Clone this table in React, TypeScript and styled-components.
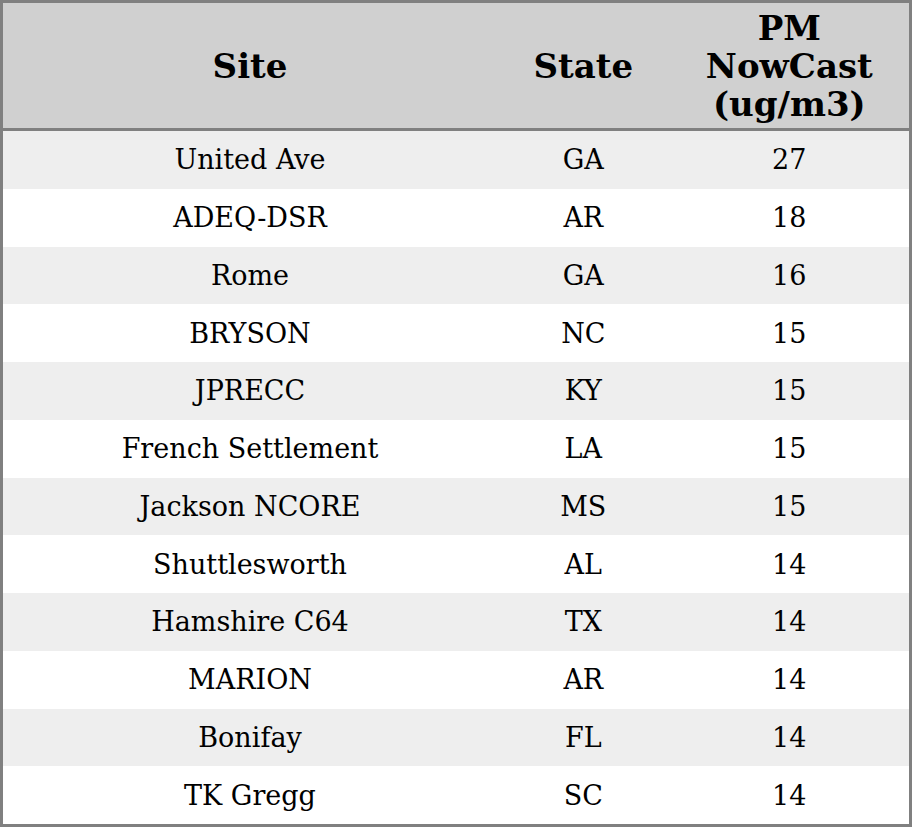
import React from 'react';
import styled, {createGlobalStyle} from "styled-components";

const GlobalStyle = createGlobalStyle`
  html, body {
    margin: 0;
    padding: 0;
    background: #ffffff;
  }
  body {
    font-family: "DejaVu Serif", serif;
    color: #000000;
  }
`

const TableContainer = styled.div`
  display: flex;
  flex-direction: column;
  width: 912px;
  height: 827px;
  box-sizing: border-box;
  border: 3px solid #808080;
`
const Row = styled.div<{header?: boolean, striped?: boolean}>`
  display: grid;
  grid-template-columns: 494px 172.6px 1fr;
  align-items: center;
  text-align: center;
  background: ${props => props.header ? '#d0d0d0' : props.striped ? '#eeeeee' : '#ffffff'};
  height: ${props => props.header ? '125px' : 'auto'};
  flex: ${props => props.header ? '0 0 auto' : '1 1 0'};
  border-bottom: ${props => props.header ? '3px solid #808080' : 'none'};
  font-size: ${props => props.header ? '34px' : '27px'};
  font-weight: ${props => props.header ? 'bold' : 'normal'};
  line-height: ${props => props.header ? '38px' : 'normal'};
`
const Cell = styled.div`
  padding: 0 4px;
`

const rows = [
    {site: 'United Ave', state: 'GA', pm: 27},
    {site: 'ADEQ-DSR', state: 'AR', pm: 18},
    {site: 'Rome', state: 'GA', pm: 16},
    {site: 'BRYSON', state: 'NC', pm: 15},
    {site: 'JPRECC', state: 'KY', pm: 15},
    {site: 'French Settlement', state: 'LA', pm: 15},
    {site: 'Jackson NCORE', state: 'MS', pm: 15},
    {site: 'Shuttlesworth', state: 'AL', pm: 14},
    {site: 'Hamshire C64', state: 'TX', pm: 14},
    {site: 'MARION', state: 'AR', pm: 14},
    {site: 'Bonifay', state: 'FL', pm: 14},
    {site: 'TK Gregg', state: 'SC', pm: 14},
]

const App: React.FC = () => {
    return (
        <>
            <GlobalStyle/>
            <TableContainer>
                <Row header>
                    <Cell>Site</Cell>
                    <Cell>State</Cell>
                    <Cell>PM<br/>NowCast<br/>(ug/m3)</Cell>
                </Row>
                {rows.map((data, i) => (
                    <Row key={data.site} striped={i % 2 === 0}>
                        <Cell>{data.site}</Cell>
                        <Cell>{data.state}</Cell>
                        <Cell>{data.pm}</Cell>
                    </Row>
                ))}
            </TableContainer>
        </>
    );
};

export default App;
